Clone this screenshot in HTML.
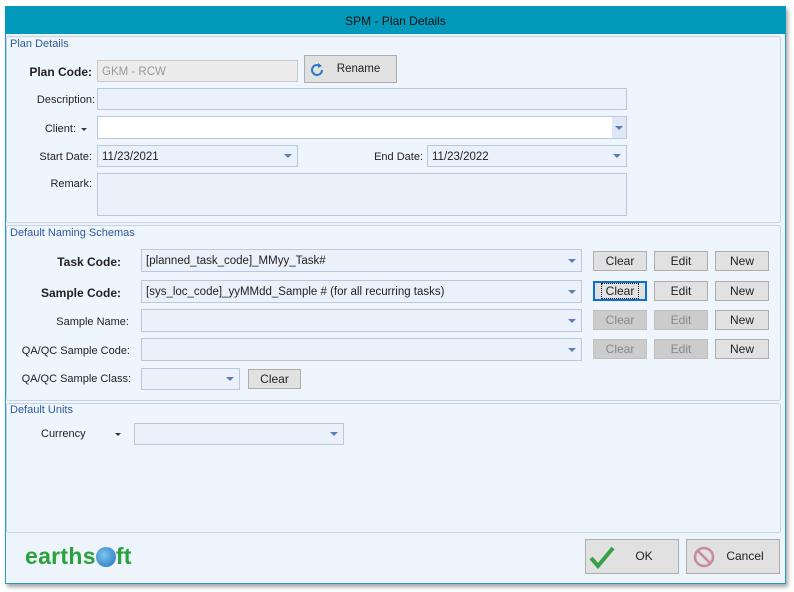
<!DOCTYPE html>
<html><head><style>
*{box-sizing:border-box;margin:0;padding:0}
body{width:794px;height:592px;background:#fff;font-family:"Liberation Sans",sans-serif;font-size:11px;color:#222;position:relative;overflow:hidden}
.a{position:absolute}
.win{left:5px;top:6px;width:781px;height:578px;background:#eef4fc;border:1px solid #2a9ab8;box-shadow:2px 3px 4px rgba(0,0,0,.35)}
.title{left:5px;top:6px;width:781px;height:28px;background:#0399ba;color:#111;font-size:12px;text-align:center;line-height:30px}
.grp{border:1px solid #c5d3e3;border-radius:3px;background:#eff5fd}
.gt{color:#2f5a9a;font-size:11px}
.in{background:#eaf1fa;border:1px solid #b8c9de}
.lbl{text-align:right;font-size:11px}
.b{font-weight:bold;font-size:12px}
.btn{background:#e1e1e1;border:1px solid #adadad;text-align:center;font-size:12px;line-height:18px}
.dis{background:#cccccc;border-color:#bfbfbf;color:#888}
.arr{position:absolute;right:5px;top:50%;margin-top:-2px;width:0;height:0;border-left:4px solid transparent;border-right:4px solid transparent;border-top:4px solid #5b7fb5}
.txt{padding-left:4px;line-height:22px;font-size:11.5px}
</style></head><body>
<div class="a win"></div>
<div class="a title">SPM - Plan Details</div>

<div class="a grp" style="left:6px;top:36px;width:775px;height:187px"></div>
<div class="a gt" style="left:10px;top:38px">Plan Details</div>
<div class="a lbl b" style="left:20px;top:65px;width:72px">Plan Code:</div>
<div class="a in txt" style="left:97px;top:60px;width:201px;height:22px;background:#ececec;border-color:#c8c8c8;color:#999">GKM - RCW</div>
<div class="a btn" style="left:304px;top:55px;width:93px;height:28px;line-height:27px;padding-left:16px;font-size:11.5px">Rename
<svg class="a" style="left:4px;top:6px" width="16" height="16" viewBox="0 0 16 16"><path d="M13 8a5 5 0 1 1-2-4" fill="none" stroke="#2a7ac8" stroke-width="2"/><path d="M9 1l4 3-4 2z" fill="#2a7ac8"/></svg></div>
<div class="a lbl" style="left:20px;top:94px;width:75px">Description:</div>
<div class="a in" style="left:97px;top:88px;width:530px;height:22px"></div>
<div class="a lbl" style="left:20px;top:123px;width:56px">Client:</div>
<div class="a" style="left:81px;top:128px;border-left:3px solid transparent;border-right:3px solid transparent;border-top:3px solid #333"></div>
<div class="a in" style="left:97px;top:116px;width:530px;height:23px;background:#fff"><div style="position:absolute;right:0;top:0;width:14px;height:21px;background:#dfe8f4"></div><div class="arr" style="right:3px"></div></div>
<div class="a lbl" style="left:20px;top:151px;width:72px">Start Date:</div>
<div class="a in txt" style="left:97px;top:145px;width:201px;height:22px">11/23/2021<div class="arr"></div></div>
<div class="a lbl" style="left:360px;top:151px;width:63px">End Date:</div>
<div class="a in txt" style="left:427px;top:145px;width:200px;height:22px">11/23/2022<div class="arr"></div></div>
<div class="a lbl" style="left:20px;top:178px;width:72px">Remark:</div>
<div class="a in" style="left:97px;top:173px;width:530px;height:43px"></div>

<div class="a grp" style="left:6px;top:225px;width:775px;height:176px"></div>
<div class="a gt" style="left:10px;top:227px">Default Naming Schemas</div>
<div class="a lbl b" style="left:20px;top:255px;width:101px">Task Code:</div>
<div class="a in txt" style="left:141px;top:249px;width:441px;height:23px">[planned_task_code]_MMyy_Task#<div class="arr"></div></div>
<div class="a lbl b" style="left:20px;top:286px;width:101px">Sample Code:</div>
<div class="a in txt" style="left:141px;top:280px;width:441px;height:23px">[sys_loc_code]_yyMMdd_Sample # (for all recurring tasks)<div class="arr"></div></div>
<div class="a lbl" style="left:20px;top:316px;width:109px">Sample Name:</div>
<div class="a in" style="left:141px;top:309px;width:441px;height:23px"><div class="arr"></div></div>
<div class="a lbl" style="left:10px;top:345px;width:120px">QA/QC Sample Code:</div>
<div class="a in" style="left:141px;top:338px;width:441px;height:23px"><div class="arr"></div></div>
<div class="a lbl" style="left:10px;top:373px;width:121px">QA/QC Sample Class:</div>
<div class="a in" style="left:141px;top:368px;width:99px;height:22px"><div class="arr"></div></div>
<div class="a btn" style="left:248px;top:369px;width:53px;height:20px">Clear</div>

<div class="a btn" style="left:593px;top:251px;width:54px;height:20px">Clear</div>
<div class="a btn" style="left:654px;top:251px;width:54px;height:20px">Edit</div>
<div class="a btn" style="left:715px;top:251px;width:54px;height:20px">New</div>
<div class="a btn" style="left:593px;top:281px;width:54px;height:20px;border:2px solid #0a6fd6;line-height:16px"><span style="outline:1px dotted #000;padding:0 4px">Clear</span></div>
<div class="a btn" style="left:654px;top:281px;width:54px;height:20px">Edit</div>
<div class="a btn" style="left:715px;top:281px;width:54px;height:20px">New</div>
<div class="a btn dis" style="left:593px;top:310px;width:54px;height:20px">Clear</div>
<div class="a btn dis" style="left:654px;top:310px;width:54px;height:20px">Edit</div>
<div class="a btn" style="left:715px;top:310px;width:54px;height:20px">New</div>
<div class="a btn dis" style="left:593px;top:339px;width:54px;height:20px">Clear</div>
<div class="a btn dis" style="left:654px;top:339px;width:54px;height:20px">Edit</div>
<div class="a btn" style="left:715px;top:339px;width:54px;height:20px">New</div>

<div class="a grp" style="left:6px;top:403px;width:775px;height:130px"></div>
<div class="a gt" style="left:10px;top:404px">Default Units</div>
<div class="a" style="left:41px;top:428px">Currency</div>
<div class="a" style="left:115px;top:433px;border-left:3px solid transparent;border-right:3px solid transparent;border-top:3px solid #333"></div>
<div class="a in" style="left:134px;top:423px;width:210px;height:22px"><div class="arr"></div></div>

<div class="a" style="left:25px;top:543px;font-size:23px;font-weight:bold;color:#2aa13c;letter-spacing:0.3px">earths<span style="display:inline-block;width:20px;height:20px;border-radius:50%;background:radial-gradient(circle at 40% 40%,#7cc4f0,#1e6fb8);vertical-align:-3px"></span>ft</div>
<div class="a btn" style="left:585px;top:539px;width:94px;height:35px;line-height:33px;padding-left:24px">OK
<svg class="a" style="left:3px;top:5px" width="26" height="24" viewBox="0 0 26 24"><path d="M2 13l7 8L24 3" fill="none" stroke="#3aa045" stroke-width="4"/></svg></div>
<div class="a btn" style="left:686px;top:539px;width:94px;height:35px;line-height:33px;padding-left:24px">Cancel
<svg class="a" style="left:5px;top:5px" width="24" height="24" viewBox="0 0 24 24"><circle cx="12" cy="12" r="9" fill="none" stroke="#c98a9c" stroke-width="2.5"/><path d="M6 6l12 12" stroke="#c98a9c" stroke-width="2.5"/></svg></div>
</body></html>
